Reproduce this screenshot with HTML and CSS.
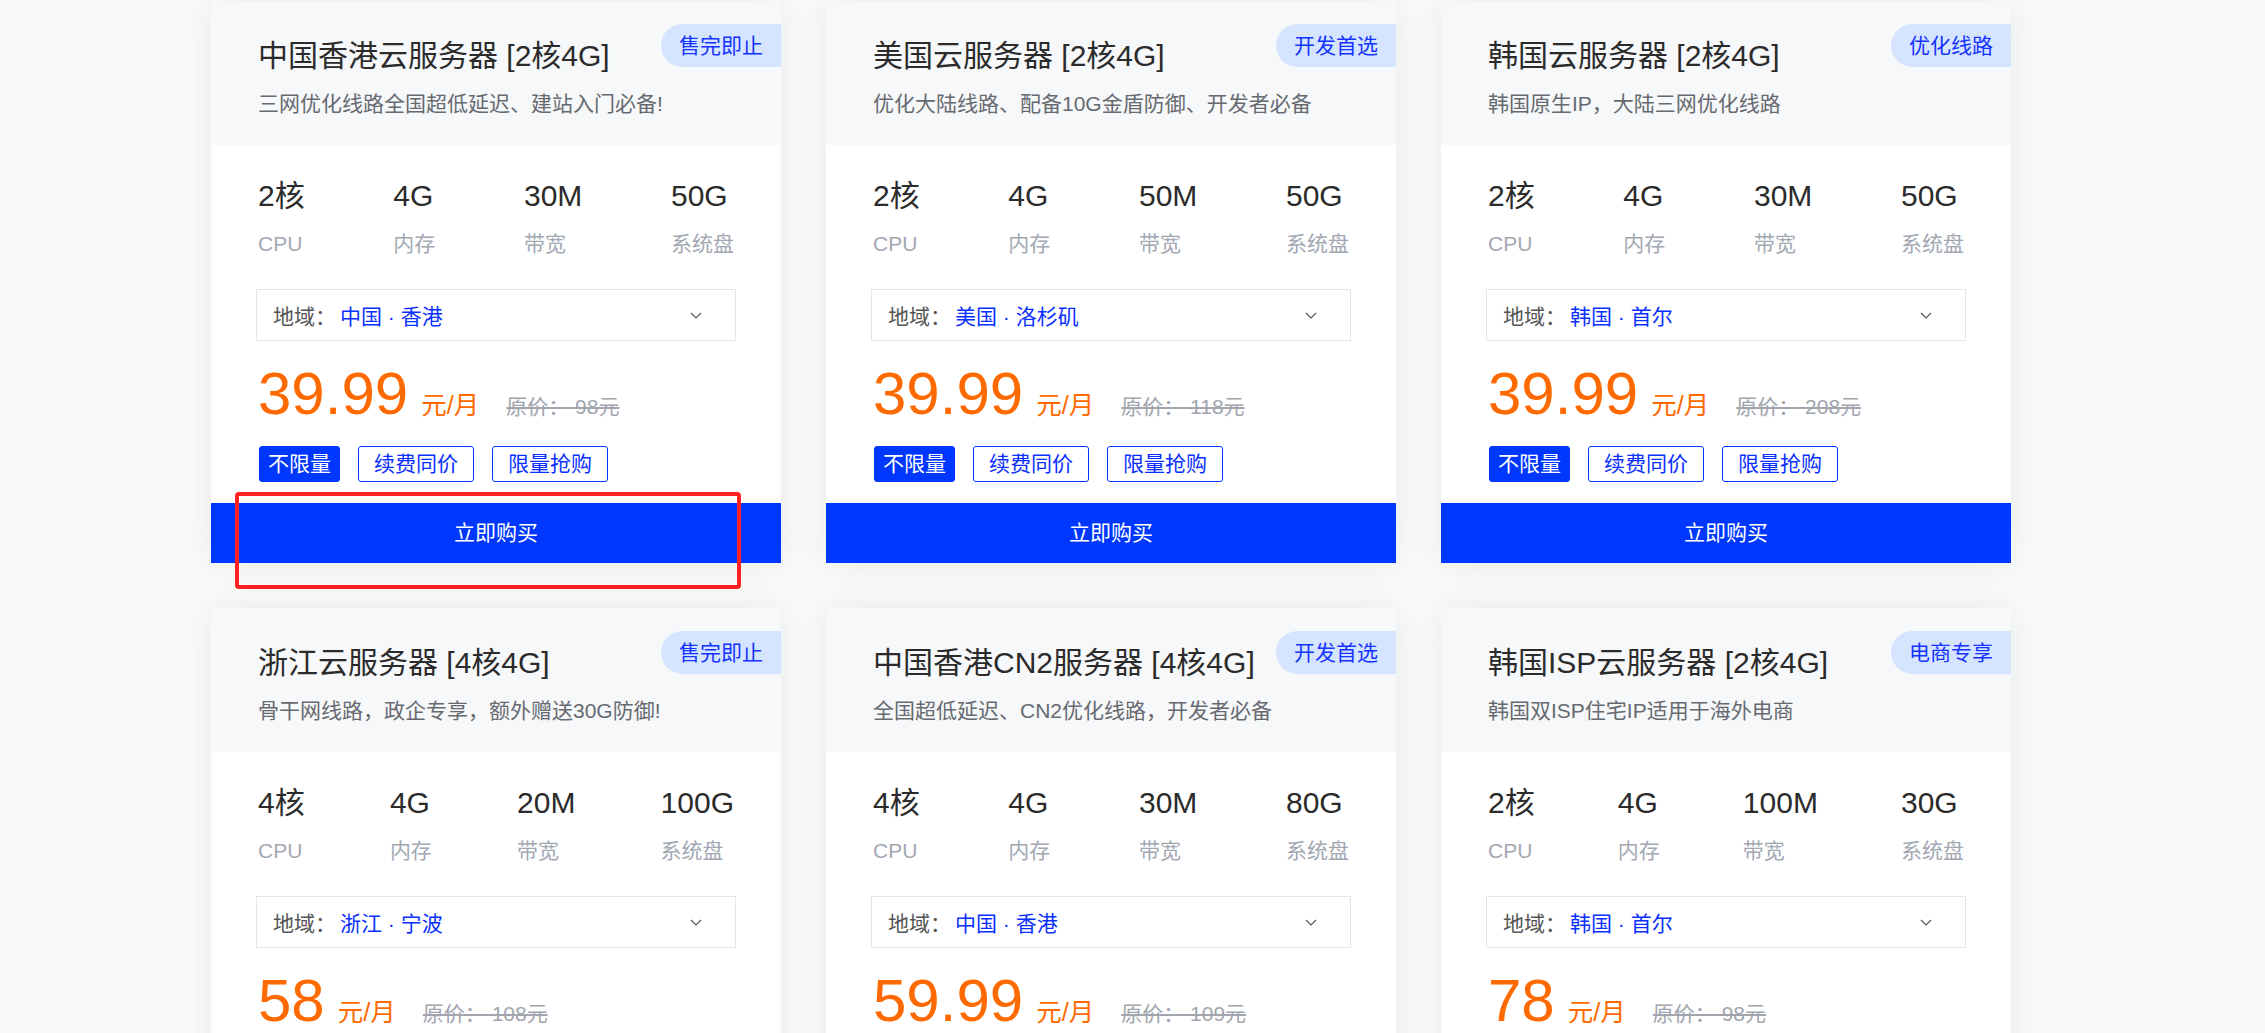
FILE: index.html
```html
<!DOCTYPE html>
<html lang="zh-CN">
<head>
<meta charset="utf-8">
<title>云服务器</title>
<link rel="stylesheet" href="styles.css">
</head>
<body>
<div class="page">
  <div class="grid">

    <div class="card">
      <div class="card-head">
        <div class="title">中国香港云服务器 [2核4G]</div>
        <div class="sub">三网优化线路全国超低延迟、建站入门必备!</div>
        <span class="badge">售完即止</span>
      </div>
      <div class="card-body">
        <div class="specs">
          <div class="spec"><div class="val">2核</div><div class="lab">CPU</div></div>
          <div class="spec"><div class="val">4G</div><div class="lab">内存</div></div>
          <div class="spec"><div class="val">30M</div><div class="lab">带宽</div></div>
          <div class="spec"><div class="val">50G</div><div class="lab">系统盘</div></div>
        </div>
        <div class="select"><span class="sel-lab">地域：</span><span class="sel-val">中国 · 香港</span><svg class="chev" width="12" height="7" viewBox="0 0 12 7"><polyline points="1,1 6,6 11,1" fill="none" stroke="#555" stroke-width="1.2"/></svg></div>
        <div class="price"><span class="num">39.99</span><span class="unit">元/月</span><span class="orig">原价： 98元</span></div>
        <div class="tags"><span class="tag fill">不限量</span><span class="tag">续费同价</span><span class="tag">限量抢购</span></div>
      </div>
      <div class="buy">立即购买</div>
      <div class="mark"></div>
    </div>

    <div class="card">
      <div class="card-head">
        <div class="title">美国云服务器 [2核4G]</div>
        <div class="sub">优化大陆线路、配备10G金盾防御、开发者必备</div>
        <span class="badge">开发首选</span>
      </div>
      <div class="card-body">
        <div class="specs">
          <div class="spec"><div class="val">2核</div><div class="lab">CPU</div></div>
          <div class="spec"><div class="val">4G</div><div class="lab">内存</div></div>
          <div class="spec"><div class="val">50M</div><div class="lab">带宽</div></div>
          <div class="spec"><div class="val">50G</div><div class="lab">系统盘</div></div>
        </div>
        <div class="select"><span class="sel-lab">地域：</span><span class="sel-val">美国 · 洛杉矶</span><svg class="chev" width="12" height="7" viewBox="0 0 12 7"><polyline points="1,1 6,6 11,1" fill="none" stroke="#555" stroke-width="1.2"/></svg></div>
        <div class="price"><span class="num">39.99</span><span class="unit">元/月</span><span class="orig">原价： 118元</span></div>
        <div class="tags"><span class="tag fill">不限量</span><span class="tag">续费同价</span><span class="tag">限量抢购</span></div>
      </div>
      <div class="buy">立即购买</div>
    </div>

    <div class="card">
      <div class="card-head">
        <div class="title">韩国云服务器 [2核4G]</div>
        <div class="sub">韩国原生IP，大陆三网优化线路</div>
        <span class="badge">优化线路</span>
      </div>
      <div class="card-body">
        <div class="specs">
          <div class="spec"><div class="val">2核</div><div class="lab">CPU</div></div>
          <div class="spec"><div class="val">4G</div><div class="lab">内存</div></div>
          <div class="spec"><div class="val">30M</div><div class="lab">带宽</div></div>
          <div class="spec"><div class="val">50G</div><div class="lab">系统盘</div></div>
        </div>
        <div class="select"><span class="sel-lab">地域：</span><span class="sel-val">韩国 · 首尔</span><svg class="chev" width="12" height="7" viewBox="0 0 12 7"><polyline points="1,1 6,6 11,1" fill="none" stroke="#555" stroke-width="1.2"/></svg></div>
        <div class="price"><span class="num">39.99</span><span class="unit">元/月</span><span class="orig">原价： 208元</span></div>
        <div class="tags"><span class="tag fill">不限量</span><span class="tag">续费同价</span><span class="tag">限量抢购</span></div>
      </div>
      <div class="buy">立即购买</div>
    </div>

    <div class="card">
      <div class="card-head">
        <div class="title">浙江云服务器 [4核4G]</div>
        <div class="sub">骨干网线路，政企专享，额外赠送30G防御!</div>
        <span class="badge">售完即止</span>
      </div>
      <div class="card-body">
        <div class="specs">
          <div class="spec"><div class="val">4核</div><div class="lab">CPU</div></div>
          <div class="spec"><div class="val">4G</div><div class="lab">内存</div></div>
          <div class="spec"><div class="val">20M</div><div class="lab">带宽</div></div>
          <div class="spec"><div class="val">100G</div><div class="lab">系统盘</div></div>
        </div>
        <div class="select"><span class="sel-lab">地域：</span><span class="sel-val">浙江 · 宁波</span><svg class="chev" width="12" height="7" viewBox="0 0 12 7"><polyline points="1,1 6,6 11,1" fill="none" stroke="#555" stroke-width="1.2"/></svg></div>
        <div class="price"><span class="num">58</span><span class="unit">元/月</span><span class="orig">原价： 108元</span></div>
        <div class="tags"><span class="tag fill">不限量</span><span class="tag">续费同价</span><span class="tag">限量抢购</span></div>
      </div>
      <div class="buy">立即购买</div>
    </div>

    <div class="card">
      <div class="card-head">
        <div class="title">中国香港CN2服务器 [4核4G]</div>
        <div class="sub">全国超低延迟、CN2优化线路，开发者必备</div>
        <span class="badge">开发首选</span>
      </div>
      <div class="card-body">
        <div class="specs">
          <div class="spec"><div class="val">4核</div><div class="lab">CPU</div></div>
          <div class="spec"><div class="val">4G</div><div class="lab">内存</div></div>
          <div class="spec"><div class="val">30M</div><div class="lab">带宽</div></div>
          <div class="spec"><div class="val">80G</div><div class="lab">系统盘</div></div>
        </div>
        <div class="select"><span class="sel-lab">地域：</span><span class="sel-val">中国 · 香港</span><svg class="chev" width="12" height="7" viewBox="0 0 12 7"><polyline points="1,1 6,6 11,1" fill="none" stroke="#555" stroke-width="1.2"/></svg></div>
        <div class="price"><span class="num">59.99</span><span class="unit">元/月</span><span class="orig">原价： 109元</span></div>
        <div class="tags"><span class="tag fill">不限量</span><span class="tag">续费同价</span><span class="tag">限量抢购</span></div>
      </div>
      <div class="buy">立即购买</div>
    </div>

    <div class="card">
      <div class="card-head">
        <div class="title">韩国ISP云服务器 [2核4G]</div>
        <div class="sub">韩国双ISP住宅IP适用于海外电商</div>
        <span class="badge">电商专享</span>
      </div>
      <div class="card-body">
        <div class="specs">
          <div class="spec"><div class="val">2核</div><div class="lab">CPU</div></div>
          <div class="spec"><div class="val">4G</div><div class="lab">内存</div></div>
          <div class="spec"><div class="val">100M</div><div class="lab">带宽</div></div>
          <div class="spec"><div class="val">30G</div><div class="lab">系统盘</div></div>
        </div>
        <div class="select"><span class="sel-lab">地域：</span><span class="sel-val">韩国 · 首尔</span><svg class="chev" width="12" height="7" viewBox="0 0 12 7"><polyline points="1,1 6,6 11,1" fill="none" stroke="#555" stroke-width="1.2"/></svg></div>
        <div class="price"><span class="num">78</span><span class="unit">元/月</span><span class="orig">原价： 98元</span></div>
        <div class="tags"><span class="tag fill">不限量</span><span class="tag">续费同价</span><span class="tag">限量抢购</span></div>
      </div>
      <div class="buy">立即购买</div>
    </div>

  </div>
</div>
</body>
</html>
```

FILE: styles.css
```css
html, body {
  margin: 0;
  padding: 0;
  height: 100%;
  overflow: hidden;
}
body {
  background: #f9fafa;
  font-family: "Liberation Sans", "Noto Sans CJK SC", sans-serif;
  color: #333;
}
.page {
  padding: 1px 0 0 211px;
}
.grid {
  display: grid;
  grid-template-columns: repeat(3, 570px);
  column-gap: 45px;
  row-gap: 45px;
}
.card {
  position: relative;
  background: #fff;
  box-shadow: 0 0 34px rgba(0, 0, 0, 0.075);
  display: flex;
  flex-direction: column;
}
.card-head {
  position: relative;
  background: #f7f8fa;
  height: 144px;
  box-sizing: border-box;
  padding: 33px 48px 0 47px;
}
.title {
  font-size: 30px;
  line-height: 44px;
  color: #2b2b2b;
  white-space: nowrap;
}
.sub {
  margin-top: 11px;
  font-size: 21px;
  line-height: 30px;
  color: #666a70;
  white-space: nowrap;
}
.badge {
  position: absolute;
  top: 23px;
  right: 0;
  height: 43px;
  line-height: 43px;
  padding: 0 18px;
  background: #d5e5ff;
  color: #1533ff;
  font-size: 21px;
  border-radius: 22px 0 0 22px;
}
.card-body {
  padding: 31px 45px 21px 45px;
}
.specs {
  display: flex;
  justify-content: space-between;
  padding: 0 2px 0 2px;
}
.spec {
  display: flex;
  flex-direction: column;
}
.val {
  font-size: 30px;
  line-height: 40px;
  color: #2b2b2b;
}
.lab {
  margin-top: 13px;
  font-size: 21px;
  line-height: 30px;
  color: #a2a8b3;
}
.select {
  margin-top: 30px;
  height: 52px;
  box-sizing: border-box;
  border: 1px solid #e6e6e6;
  display: flex;
  align-items: center;
  padding: 0 33px 0 16px;
  font-size: 21px;
}
.sel-lab {
  color: #555;
}
.sel-val {
  margin-left: 4px;
  color: #0a30ff;
  flex: 1;
}
.chev {
  display: block;
}
.price {
  margin-top: 23px;
  padding-left: 2px;
  display: flex;
  align-items: baseline;
  height: 60px;
}
.num {
  font-size: 60px;
  line-height: 60px;
  color: #ff6a00;
}
.unit {
  margin-left: 13px;
  font-size: 25.5px;
  line-height: 1;
  color: #ff6a00;
}
.orig {
  margin-left: 27px;
  font-size: 21px;
  line-height: 1;
  color: #a1a5ad;
  text-decoration: line-through;
}
.tags {
  margin-top: 22px;
  padding-left: 3px;
  display: flex;
  gap: 18px;
}
.tag {
  height: 36px;
  box-sizing: border-box;
  line-height: 34px;
  border: 1px solid #0037ff;
  border-radius: 3px;
  padding: 0 15px;
  font-size: 21px;
  color: #0a30ff;
}
.tag.fill {
  background: #0037ff;
  color: #fff;
  padding: 0 8px;
}
.buy {
  height: 60px;
  line-height: 60px;
  background: #0037ff;
  color: #fff;
  text-align: center;
  font-size: 21px;
}
.mark {
  position: absolute;
  left: 24px;
  top: 491px;
  width: 506px;
  height: 97px;
  box-sizing: border-box;
  border: 4px solid #ff2020;
  border-radius: 4px;
  pointer-events: none;
}
```
